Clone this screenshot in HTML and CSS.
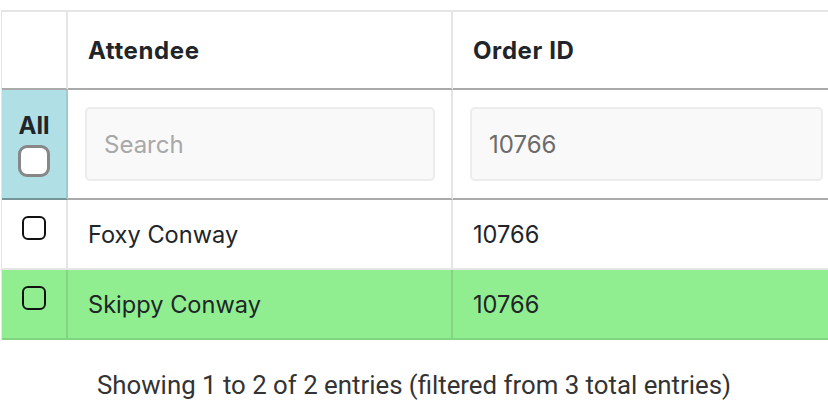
FILE: index.html
```html
<!DOCTYPE html>
<html lang="en">
<head>
<meta charset="utf-8">
<title>Attendees</title>
<link rel="stylesheet" href="styles.css">
</head>
<body>
<div class="page">
  <div class="table-wrap">
    <table class="grid">
      <colgroup>
        <col class="c-check">
        <col class="c-name">
        <col class="c-order">
      </colgroup>
      <thead>
        <tr class="head-row">
          <th class="cell check-cell"></th>
          <th class="cell">Attendee</th>
          <th class="cell">Order ID</th>
        </tr>
        <tr class="filter-row">
          <th class="cell check-cell all-cell">
            <div class="all-label">All</div>
            <input type="checkbox" class="all-box" aria-label="Select all">
          </th>
          <th class="cell filter-cell"><input class="filter-input" type="text" placeholder="Search"></th>
          <th class="cell filter-cell"><input class="filter-input value" type="text" value="10766"></th>
        </tr>
      </thead>
      <tbody>
        <tr class="data-row">
          <td class="cell check-cell"><input type="checkbox" class="row-box" aria-label="Select row"></td>
          <td class="cell">Foxy Conway</td>
          <td class="cell">10766</td>
        </tr>
        <tr class="data-row selected">
          <td class="cell check-cell"><input type="checkbox" class="row-box" aria-label="Select row"></td>
          <td class="cell">Skippy Conway</td>
          <td class="cell">10766</td>
        </tr>
      </tbody>
    </table>
  </div>
  <p class="summary">Showing 1 to 2 of 2 entries (filtered from 3 total entries)</p>
</div>
</body>
</html>
```

FILE: styles.css
```css
html, body {
  margin: 0;
  padding: 0;
  background: #ffffff;
}

body {
  font-family: Inter, "Noto Sans", "Liberation Sans", sans-serif;
  color: #212529;
  font-size: 24px;
}

.page {
  width: 828px;
  overflow: hidden;
  padding-top: 10px;
}

.table-wrap {
  width: 828px;
  overflow: hidden;
}

.grid {
  table-layout: fixed;
  border-collapse: separate;
  border-spacing: 0;
  width: 837px;
  margin-left: 1px;
  border-left: 1px solid rgba(0, 0, 0, 0.1);
}

.c-check { width: 66px; }
.c-name { width: 385px; }
.c-order { width: 386px; }

.cell {
  box-sizing: border-box;
  padding: 0 20px;
  text-align: left;
  vertical-align: middle;
  border-right: 2px solid rgba(0, 0, 0, 0.1);
  border-bottom: 2px solid rgba(0, 0, 0, 0.1);
}

.cell:last-child {
  border-right: none;
}

.head-row .cell {
  height: 80px;
  border-top: 2px solid rgba(0, 0, 0, 0.1);
  border-bottom: 2px solid rgba(0, 0, 0, 0.33);
  font-weight: 700;
  letter-spacing: 0.6px;
}

.filter-row .cell {
  height: 110px;
  border-bottom: 2px solid rgba(0, 0, 0, 0.33);
  font-weight: 400;
}

.filter-cell {
  padding: 0 16px 0 17px;
}

.check-cell {
  padding: 0;
  text-align: center;
}

.all-cell {
  background: #b0e0e6;
}

.all-label {
  font-weight: 700;
  line-height: 26px;
  margin-top: 2px;
}

.all-box {
  appearance: none;
  -webkit-appearance: none;
  display: block;
  box-sizing: border-box;
  width: 32px;
  height: 32px;
  margin: 6px auto 0;
  border: 3px solid #878787;
  border-radius: 9px;
  background: #ffffff;
}

.filter-input {
  display: block;
  box-sizing: border-box;
  width: 100%;
  height: 74px;
  margin: 0;
  padding: 0 17px;
  border: 2px solid #ececec;
  border-radius: 5px;
  background: #f9f9f9;
  font-family: Inter, "Noto Sans", "Liberation Sans", sans-serif;
  font-size: 24px;
  color: #6b6b6b;
  outline: none;
}

.filter-input::placeholder {
  color: #a8a8a8;
}

.data-row .cell {
  height: 70px;
  font-size: 23.6px;
}

.data-row.selected .cell {
  background: #90ee90;
}

.row-box {
  appearance: none;
  -webkit-appearance: none;
  display: block;
  box-sizing: border-box;
  width: 24px;
  height: 24px;
  margin: -12px auto 0;
  border: 2px solid #111111;
  border-radius: 6px;
  background: transparent;
}

.summary {
  margin: 0;
  padding-top: 30px;
  text-align: center;
  font-family: Roboto, "Liberation Sans", sans-serif;
  font-size: 25.8px;
  color: #333333;
}
```
